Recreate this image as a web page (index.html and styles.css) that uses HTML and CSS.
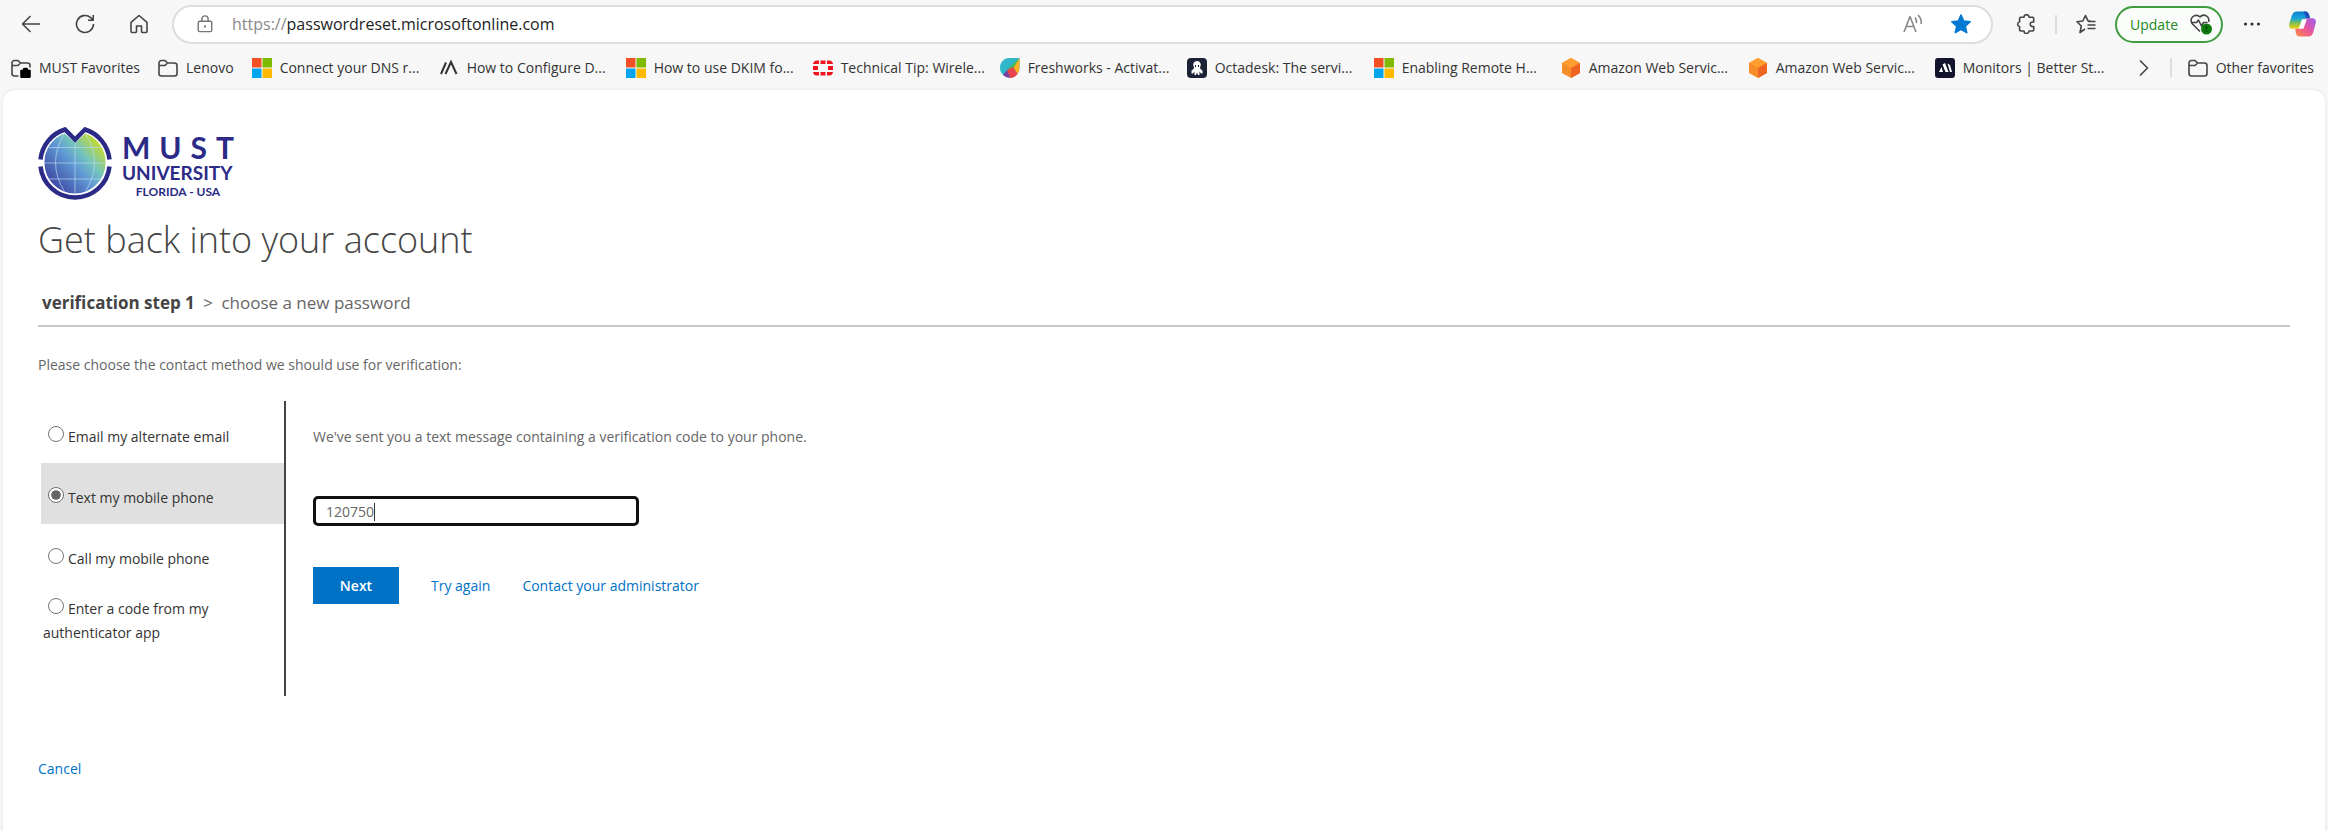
FILE: index.html
```html
<!DOCTYPE html>
<html lang="en">
  <head>
    <meta charset="UTF-8" />
    <meta name="viewport" content="width=device-width, initial-scale=1.0" />
    <title>Get back into your account</title>
    <link rel="stylesheet" href="styles.css">
  </head>
  <body>
    <!-- shared icons -->
    <svg class="sprite" aria-hidden="true">
      <symbol id="folder" viewBox="0 0 20 20">
        <path d="M1 5a2.500 2.500 0 0 1 2.500-2.500h3.500l2.500 2.500h7a2.500 2.500 0 0 1 2.500 2.500v8a2.500 2.500 0 0 1-2.500 2.500h-13a2.500 2.500 0 0 1-2.500-2.500z M1 7.500h6l2.500-2.500" />
      </symbol>
      <symbol id="folder-work" viewBox="0 0 20 20">
        <path d="M7.500 18h-4A2.500 2.500 0 0 1 1 15.500V5a2.500 2.500 0 0 1 2.500-2.500h3.500l2.500 2.500h7a2.500 2.500 0 0 1 2.500 2.500v2 M1 7.500h6l2.500-2.500" />
        <path fill="#000" stroke="#000" d="M10 12.500h2.500v-1q0-1 1-1h2q1 0 1 1v1H19v6q0 .8-.8.8h-7.500q-.7 0-.7-.8z" />
      </symbol>
      <symbol id="microsoft" viewBox="0 0 20 20">
        <path fill="#f25022" d="M0 0h9.500v9.500H0z" />
        <path fill="#7fba00" d="M10.500 0H20v9.500h-9.500z" />
        <path fill="#00a4ef" d="M0 10.500h9.500V20H0z" />
        <path fill="#ffb900" d="M10.500 10.500H20V20h-9.500z" />
      </symbol>
      <symbol id="aws" viewBox="0 0 20 20">
        <path fill="#f78d2a" d="M10 0l9 5v10l-9 5-9-5V5z" />
        <path fill="#ff9d2e" d="M10 0l9 5-9 5-9-5z" />
        <path fill="#ee6423" d="M19 5v10l-9 5V10z" />
      </symbol>
    </svg>

    <header class="browser">
      <div class="toolbar">
        <button class="icon-btn" aria-label="Back">
          <svg class="icon" viewBox="0 0 20 20"><path d="M19 10H1.500M9.500 2L1.500 10l8 8" /></svg>
        </button>
        <button class="icon-btn" aria-label="Refresh">
          <svg class="icon" viewBox="0 0 20 20"><path d="M18.500 10a8.500 8.500 0 1 1-2.800-6.300l2.300 2.300M18.200 1v5.200H13" /></svg>
        </button>
        <button class="icon-btn" aria-label="Home">
          <svg class="icon" viewBox="0 0 20 20"><path d="M2 8.300L10 1.500l8 6.800v9.200a1 1 0 0 1-1 1h-3.500a1 1 0 0 1-1-1V12h-5v5.500a1 1 0 0 1-1 1H3a1 1 0 0 1-1-1z" /></svg>
        </button>
        <div class="address">
          <svg class="icon lock" viewBox="0 0 20 20"><path d="M4 7h12a1.500 1.500 0 0 1 1.500 1.500v8.500a1.500 1.500 0 0 1-1.500 1.500H4A1.500 1.500 0 0 1 2.500 17V8.500A1.500 1.500 0 0 1 4 7zM6.500 7V4.500a3.500 3.500 0 0 1 7 0V7" /><circle cx="10" cy="12.700" r=".5" /></svg>
          <span class="url"><span class="scheme">https://</span>passwordreset.microsoftonline.com</span>
          <button class="icon-btn read" aria-label="Read aloud">
            <svg class="icon" viewBox="0 0 20 20"><path d="M1 18L7 2.500 13 18M3.200 12.500h7.600M12 3.500q2 2.500 1.500 5.500M15 1q4 4 3 9" /></svg>
          </button>
          <button class="icon-btn star" aria-label="Edit favorite">
            <svg class="icon" viewBox="0 0 20 20"><path d="M10 1l2.700 6 6.500.7-4.900 4.400 1.400 6.500L10 15.300l-5.700 3.300 1.400-6.500L.8 7.700l6.500-.7z" /></svg>
          </button>
        </div>
        <div class="actions">
          <button class="icon-btn" aria-label="Extensions">
            <svg class="icon" viewBox="0 0 20 20"><path d="M8 3.200a2.500 2.500 0 0 1 5 0h3.500a1.200 1.200 0 0 1 1.200 1.200V8h-1.200a2.200 2.200 0 0 0 0 4.500h1.200v3.300a1.200 1.200 0 0 1-1.200 1.200H13a2.500 2.500 0 0 1-5 0H4.800a1.200 1.200 0 0 1-1.200-1.200v-3a2.600 2.600 0 0 1 0-5V4.400a1.200 1.200 0 0 1 1.200-1.200z" /></svg>
          </button>
          <span class="divider"></span>
          <button class="icon-btn" aria-label="Favorites">
            <svg class="icon" viewBox="0 0 20 20"><path d="M9 15L4 18.500 5.300 12 1 7.800l5.800-.8L9.500 1.500 12 6.800l3 .5M12 7.500h7.500M11.500 11h8M11.500 14.500h8" /></svg>
          </button>
          <button class="update">
            Update
            <svg class="icon heart" viewBox="0 0 22 22"><path d="M10 18.500l-7.500-7.500a5 5 0 0 1 7.500-7 5 5 0 0 1 8.500 5M2 9.500h4.500L8.500 7l3 6 2-3.500h4" /><circle class="alert" cx="16.500" cy="16" r="5.500" /><path class="mark" d="M16.500 13v3.500M16.500 18v1" /></svg>
          </button>
          <button class="icon-btn" aria-label="Settings and more">
            <svg class="icon dots" viewBox="0 0 20 20"><circle cx="3.500" cy="10" r="1.600" /><circle cx="10" cy="10" r="1.600" /><circle cx="16.500" cy="10" r="1.600" /></svg>
          </button>
          <button class="icon-btn copilot" aria-label="Copilot">
            <svg viewBox="0 0 28 26">
              <defs>
                <linearGradient id="cool" x1="0" y1="0" x2="0" y2="1">
                  <stop offset="0" stop-color="#0f7fd6" />
                  <stop offset=".4" stop-color="#18a6d8" />
                  <stop offset=".7" stop-color="#8bc145" />
                  <stop offset="1" stop-color="#f7cf17" />
                </linearGradient>
                <linearGradient id="warm" x1="1" y1="0" x2="0" y2="1">
                  <stop offset="0" stop-color="#9a5cf2" />
                  <stop offset=".5" stop-color="#e8569c" />
                  <stop offset="1" stop-color="#ff8a3c" />
                </linearGradient>
              </defs>
              <path fill="url(#cool)" d="M8 0h9q3 0 4 4l.5 3H18q-2 0-3 3l-2 5q-1 3-4 3H4q-5 0-3.500-6L3 4q1.500-4 5-4z" />
              <path fill="#1c4fb8" d="M15 0h2q3 0 4 4l.8 3H18z" />
              <path fill="url(#warm)" d="M20 26h-9q-3 0-4-4l-.5-4H9q3 0 4-3l2-5q1-3 4-3h5q5 0 3.500 6L25 22q-1.500 4-5 4z" />
              <path fill="#fff" d="M13.500 8h5L15 18h-5z" />
            </svg>
          </button>
        </div>
      </div>

      <nav class="favorites">
        <a class="folder" href="#"><svg class="icon"><use href="#folder-work" /></svg>MUST Favorites</a>
        <a class="folder" href="#"><svg class="icon"><use href="#folder" /></svg>Lenovo</a>
        <a class="site" href="#"><svg><use href="#microsoft" /></svg>Connect your DNS r...</a>
        <a class="site" href="#"><svg viewBox="0 0 20 20"><path fill="none" stroke="#333" stroke-width="2" d="M2 16L7 4.500M6.500 16L12 4l5.500 12" /></svg>How to Configure D...</a>
        <a class="site" href="#"><svg><use href="#microsoft" /></svg>How to use DKIM fo...</a>
        <a class="site" href="#"><svg viewBox="0 0 20 20"><path fill="#f0141e" d="M7.500 2.500h5V6h-5zM7.500 14h5v3.500h-5zM0 8h5v4H0zM15 8h5v4h-5zM4 2.500h2V6H0q.5-3.500 4-3.500zM16 2.500h-2V6h6q-.5-3.500-4-3.500zM4 17.500h2V14H0q.5 3.500 4 3.500zM16 17.500h-2V14h6q-.5 3.500-4 3.500z" /></svg>Technical Tip: Wirele...</a>
        <a class="site" href="#"><svg viewBox="0 0 20 20"><path fill="#1f9ed8" d="M19.500 0v10a9.700 9.700 0 1 1-10-10z" /><path fill="#38c6c0" d="M19.500 0L3 17A9.700 9.700 0 0 1 9.500 0z" opacity=".6" /><path fill="#ffb01f" d="M19.500 0v10a9.700 9.700 0 0 1-2 6L13 9z" /><path fill="#4fb848" d="M19.500 0L7 12l6-1z" /><path fill="#e8434f" d="M13 9l4.500 7a9.700 9.700 0 0 1-7.500 4L7 12z" /><path fill="#7a3fa0" d="M7 12l3 8q-4 0-7-3z" /></svg>Freshworks - Activat...</a>
        <a class="site" href="#"><svg viewBox="0 0 20 20"><rect width="20" height="20" rx="4" fill="#1b2236" /><path fill="#fff" d="M10 3a4 4 0 0 1 3 6.500q0 2 2.500 3v3h-1.500l-1.500-2v3.500h-1.500L10 14.500 9 17H7.500v-3.500l-1.500 2H4.500v-3q2.500-1 2.500-3A4 4 0 0 1 10 3z" /><path stroke="#1b2236" d="M8.500 7v2M11.500 7v2" /></svg>Octadesk: The servi...</a>
        <a class="site" href="#"><svg><use href="#microsoft" /></svg>Enabling Remote H...</a>
        <a class="site" href="#"><svg><use href="#aws" /></svg>Amazon Web Servic...</a>
        <a class="site" href="#"><svg><use href="#aws" /></svg>Amazon Web Servic...</a>
        <a class="site" href="#"><svg viewBox="0 0 20 20"><rect width="20" height="20" rx="3" fill="#11142a" /><path fill="#fff" d="M4 14l2.500-5L8 14zM7.500 6.500L10 5l3.500 9h-3zM12.500 5.500L15 7l2 7h-2z" /></svg>Monitors | Better St...</a>
        <div class="more">
          <button class="icon-btn" aria-label="More favorites">
            <svg class="icon" viewBox="0 0 20 20"><path d="M6 2.500l7.500 7.500L6 17.500" /></svg>
          </button>
          <span class="divider"></span>
          <a class="folder" href="#"><svg class="icon"><use href="#folder" /></svg>Other favorites</a>
        </div>
      </nav>
    </header>

    <main class="page">
      <div class="logo">
        <svg viewBox="0 0 74 74" aria-hidden="true">
          <defs>
            <linearGradient id="globe" x1="0.1" y1="0.9" x2="0.9" y2="0.2">
              <stop offset="0" stop-color="#3a3f9e" />
              <stop offset=".5" stop-color="#5f98d4" />
              <stop offset=".72" stop-color="#74c4bd" />
              <stop offset="1" stop-color="#bcd93a" />
            </linearGradient>
          </defs>
          <path fill="url(#globe)" d="M26.500 7.500L37 16.500 47.500 7.500A30.500 30.500 0 0 1 67.500 37 30.500 30.500 0 0 1 6.500 37 30.500 30.500 0 0 1 26.500 7.500z" />
          <path fill="none" stroke="#b8d8f0" stroke-width="1" opacity=".7" d="M37 16v51M6.500 37h61M11 21.500h52M11 53h52M26.500 7.500q-18 29 0 58M47.500 7.500q18 29 0 58" />
          <path fill="none" stroke="#2b2a86" stroke-width="4.500" d="M2.500 33.500A35 35 0 0 1 27 3.500L37 13.500 47 3.500a35 35 0 0 1 24.500 30M2.500 40.500a34.700 34.700 0 0 0 69 0" />
        </svg>
        <div class="logo-text">
          <div class="logo-must"><span>M</span><span>U</span><span>S</span><span>T</span></div>
          <div class="logo-university">UNIVERSITY</div>
          <div class="logo-place">FLORIDA - USA</div>
        </div>
      </div>

      <h1>Get back into your account</h1>
      <p class="steps"><strong>verification step 1</strong> <span class="arrow">&gt;</span> choose a new password</p>
      <p class="intro">Please choose the contact method we should use for verification:</p>

      <form class="verify">
        <div class="methods">
          <label class="method"><input type="radio" name="method" />Email my alternate email</label>
          <label class="method selected"><input type="radio" name="method" checked />Text my mobile phone</label>
          <label class="method"><input type="radio" name="method" />Call my mobile phone</label>
          <label class="method long"><input type="radio" name="method" />Enter a code from my authenticator app</label>
        </div>
        <div class="code">
          <label for="code">We've sent you a text message containing a verification code to your phone.</label>
          <div class="code-field">
            <input id="code" type="text" value="120750" autocomplete="off" />
            <span class="caret"></span>
          </div>
          <div class="code-actions">
            <button type="button" class="next">Next</button>
            <a href="#">Try again</a>
            <a href="#">Contact your administrator</a>
          </div>
        </div>
      </form>

      <a class="cancel" href="#">Cancel</a>
    </main>
  </body>
</html>
```

FILE: styles.css
```css
* {
  box-sizing: border-box;
}
body {
  display: flex;
  flex-direction: column;
  min-height: 100vh;
  margin: 0;
  background-color: #f7f7f7;
  color: #666;
  font-family: "Open Sans", "Noto Sans", sans-serif;
  font-size: 14px;
}
button {
  padding: 0;
  border: none;
  background: none;
  font: inherit;
  cursor: pointer;
}
a {
  color: #0072c6;
  text-decoration: none;
}
svg {
  display: block;
  flex: none;
}
.sprite {
  position: absolute;
  width: 0;
  height: 0;
}
.icon {
  width: 20px;
  height: 20px;
  fill: none;
  stroke: #444;
  stroke-width: 1.6;
  stroke-linejoin: round;
}

/* browser toolbar */
.toolbar {
  display: flex;
  align-items: center;
  gap: 34px;
  height: 48px;
  padding: 0 12px 0 21px;
}
.address {
  display: flex;
  flex: 1;
  align-items: center;
  height: 39px;
  margin-left: -11px;
  padding: 0 20px 0 22px;
  border: 2px solid #ddd;
  border-radius: 20px;
  background-color: #fff;
}
.lock {
  width: 18px;
  stroke: #777;
}
.url {
  flex: 1;
  margin-left: 18px;
  color: #222;
  font-size: 16px;
}
.scheme {
  color: #888;
}
.read {
  margin-right: 28px;
}
.read .icon {
  stroke: #888;
}
.star .icon {
  fill: #0078d4;
  stroke: #0078d4;
}
.actions {
  display: flex;
  align-items: center;
  gap: 19px;
  margin-left: -11px;
}
.divider {
  width: 2px;
  height: 19px;
  background-color: #ddd;
}
.update {
  display: flex;
  align-items: center;
  gap: 12px;
  height: 37px;
  padding: 0 9px 0 13px;
  border: 2px solid #3f9c3f;
  border-radius: 19px;
  color: #218a21;
  background-color: #fbfdfb;
}
.heart {
  width: 22px;
  height: 22px;
}
.heart .alert {
  fill: #107c10;
  stroke: none;
}
.heart .mark {
  stroke: #0a3d0a;
}
.dots {
  fill: #333;
  stroke: none;
}
.copilot {
  margin-left: 8px;
}
.copilot svg {
  width: 27px;
  height: 26px;
}

/* favorites bar */
.favorites {
  display: flex;
  align-items: center;
  height: 42px;
  padding: 0 14px 3px 11px;
  color: #333;
}
.favorites a {
  display: flex;
  align-items: center;
  gap: 8px;
  color: #333;
  white-space: nowrap;
}
.favorites a svg {
  width: 20px;
  height: 20px;
}
.favorites > .folder {
  margin-right: 18px;
}
.favorites .site {
  width: 187px;
}
.more {
  display: flex;
  align-items: center;
  gap: 16px;
  margin-left: auto;
}

/* page */
.page {
  flex: 1;
  margin: 0 3px;
  padding: 36px 35px 24px;
  border-radius: 12px 12px 0 0;
  background-color: #fff;
  box-shadow: 0 0 3px #ddd;
}
.logo {
  display: flex;
  gap: 10px;
  color: #2b2a86;
  font-family: Lato, sans-serif;
  font-weight: bold;
}
.logo svg {
  width: 74px;
  height: 74px;
}
.logo-text {
  width: 112px;
  padding-top: 6px;
}
.logo-must {
  display: flex;
  justify-content: space-between;
  font-size: 30px;
  line-height: 30px;
}
.logo-university {
  font-size: 19px;
  line-height: 22px;
}
.logo-place {
  font-size: 12px;
  line-height: 16px;
  text-align: center;
}
h1 {
  margin: 12px 0 0;
  color: #444;
  font-size: 36px;
  font-weight: 300;
  line-height: 56px;
}
.steps {
  margin: 21px 0 0;
  padding: 0 4px 8px;
  border-bottom: 2px solid #c8c8c8;
  font-size: 17px;
  line-height: 28px;
}
.steps strong {
  color: #444;
}
.arrow {
  margin: 0 4px;
}
.intro {
  margin: 26px 0 0;
  line-height: 24px;
}
.verify {
  display: flex;
  margin-top: 24px;
}
.methods {
  width: 248px;
  padding: 1px 0 51px 3px;
  border-right: 2px solid #444;
  color: #333;
}
.method {
  display: block;
  height: 61px;
  padding: 23px 2px 0;
  line-height: 24px;
}
.method.selected {
  background-color: #e0e0e0;
}
.method.long {
  height: auto;
  padding-top: 12px;
}
.method input {
  width: 16px;
  height: 16px;
  margin: 0 4px 0 5px;
  accent-color: #666;
}
.code {
  padding: 24px 0 0 27px;
}
.code > label {
  display: block;
  line-height: 24px;
}
.code-field {
  position: relative;
  width: 326px;
  margin-top: 47px;
}
.code-field input {
  width: 100%;
  height: 30px;
  padding: 0 10px;
  border: 3px solid #111;
  border-radius: 5px;
  outline: none;
  color: #666;
  font: inherit;
}
.caret {
  position: absolute;
  top: 7px;
  left: 61px;
  width: 1px;
  height: 18px;
  background-color: #333;
}
.code-actions {
  display: flex;
  align-items: center;
  gap: 32px;
  margin-top: 41px;
}
.next {
  width: 86px;
  height: 37px;
  background-color: #0072c6;
  color: #fff;
  font-weight: 600;
}
.cancel {
  display: inline-block;
  margin-top: 61px;
  line-height: 24px;
}
```
